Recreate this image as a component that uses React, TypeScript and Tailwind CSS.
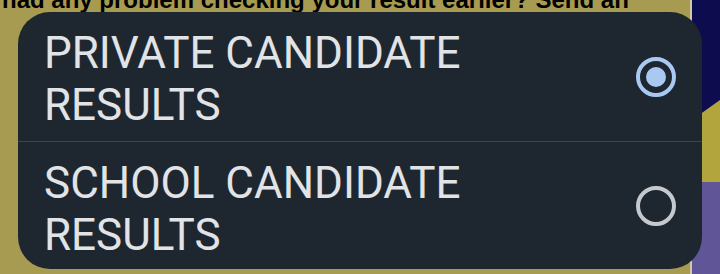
import React from "react";

function Radio({ selected }: { selected: boolean }) {
  return selected ? (
    <div className="w-[40px] h-[40px] rounded-full border-[4px] border-[#a9c9f2] flex items-center justify-center shrink-0">
      <div className="w-[20px] h-[20px] rounded-full bg-[#a9c9f2]" />
    </div>
  ) : (
    <div className="w-[40px] h-[40px] rounded-full border-[4px] border-[#c5c8cd] shrink-0" />
  );
}

export default function App() {
  const rows = [
    { l1: "PRIVATE CANDIDATE", l2: "RESULTS", sel: true, h: "h-[129px]" },
    { l1: "SCHOOL CANDIDATE", l2: "RESULTS", sel: false, h: "h-[127px]" },
  ];
  return (
    <div className="relative w-[720px] h-[274px] overflow-hidden flex bg-[#a69b50]">
      <div className="flex-1 overflow-hidden">
        <div
          className="mt-[-12px] ml-[2px] whitespace-nowrap text-[24px] font-bold text-black leading-[24px]"
          style={{ fontFamily: '"Liberation Sans", Arial, sans-serif' }}
        >
          had any problem checking your result earlier? Send an
        </div>
      </div>
      <div className="w-[2px] bg-[#cfc9a6]" />
      <div className="w-[28px] flex flex-col">
        <div className="h-[100px] bg-[#0d0c4f]" />
        <svg width="28" height="20" className="block">
          <rect width="28" height="20" fill="#b3a53d" />
          <polygon points="0,0 28,0 0,20" fill="#0d0c4f" />
        </svg>
        <div className="h-[62px] bg-[#b3a53d]" />
        <div className="flex-1 bg-[#5f5597]" />
      </div>

      <div
        className="absolute left-[18px] top-[12px] w-[684px] h-[257px] rounded-[32px] bg-[#1e272f] flex flex-col overflow-hidden"
        style={{ fontFamily: "Roboto, sans-serif" }}
      >
        {rows.map((r, i) => (
          <React.Fragment key={i}>
            {i > 0 && <div className="h-[1px] bg-[#3a444c]" />}
            <div className={`${r.h} relative flex items-center justify-between pl-[26px] pr-[26px]`}>
              <div className="self-start pt-[15px] text-[44px] leading-[52px] text-[#e1e3e7]">
                <div>{r.l1}</div>
                <div>{r.l2}</div>
              </div>
              <Radio selected={r.sel} />
            </div>
          </React.Fragment>
        ))}
      </div>
    </div>
  );
}
